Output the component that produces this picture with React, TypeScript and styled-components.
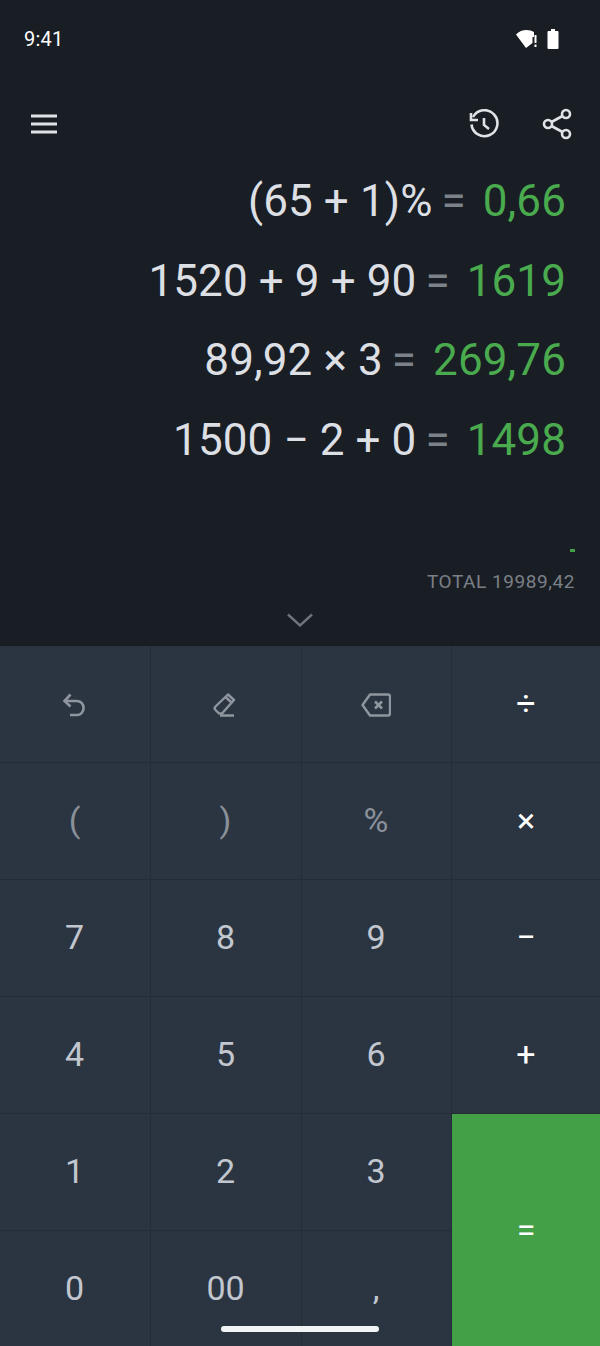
import styled, { createGlobalStyle } from 'styled-components';

const GlobalStyle = createGlobalStyle`
	html, body {
		margin: 0;
		padding: 0;
		background: #191d24;
		font-family: Roboto, 'Liberation Sans', sans-serif;
	}
`;

const Screen = styled.div`
	width: 600px;
	height: 1346px;
	overflow: hidden;
	position: relative;
	background: #191d24;
	display: flex;
	flex-direction: column;
`;

const Display = styled.div`
	height: 646px;
	flex-shrink: 0;
	display: flex;
	flex-direction: column;
`;

const StatusBar = styled.div`
	height: 78px;
	padding: 0 41px 0 24px;
	display: flex;
	align-items: center;
	justify-content: space-between;
	box-sizing: border-box;
	color: #fff;
	font-size: 20px;
	letter-spacing: 0.2px;
`;

const StatusIcons = styled.div`
	display: flex;
	align-items: center;
	gap: 7px;
`;

const Toolbar = styled.div`
	height: 44px;
	margin-top: 24px;
	padding: 0 28px 0 30px;
	display: flex;
	align-items: center;
	justify-content: space-between;
`;

const ToolGroup = styled.div`
	display: flex;
	align-items: center;
	gap: 43px;
`;

const Lines = styled.div`
	margin-top: 16px;
	padding-right: 34px;
	display: flex;
	flex-direction: column;
	align-items: flex-end;
`;

const Line = styled.div`
	height: 79.5px;
	line-height: 79.5px;
	font-size: 44px;
	font-weight: 400;
	letter-spacing: 0.1px;
	color: #dcdfe3;
	white-space: pre;
`;

const Equals = styled.span`
	color: #7c828a;
	margin: 0 17px 0 9px;
`;

const Result = styled.span`
	color: #4aaa4e;
`;

const Totals = styled.div`
	margin-top: auto;
	padding-right: 25px;
	display: flex;
	flex-direction: column;
	align-items: flex-end;
`;

const Dash = styled.div`
	width: 5px;
	height: 3px;
	background: #43a047;
	margin: 0 0 18px;
`;

const TotalText = styled.div`
	font-size: 19px;
	line-height: 24px;
	margin-bottom: 1px;
	letter-spacing: 0.55px;
	color: #7b8087;
`;

const Chevron = styled.div`
	height: 42px;
	display: flex;
	align-items: center;
	justify-content: center;
	margin: 4px 0 5px;
`;

const Keypad = styled.div`
	flex: 1;
	display: grid;
	grid-template-columns: 151px 151px 150px 148px;
	grid-template-rows: repeat(6, 117px);
	background: #2b3541;
`;

const Key = styled.div<{ $tone?: 'digit' | 'muted' | 'icon' | 'op' | 'equals' }>`
	display: flex;
	align-items: center;
	justify-content: center;
	box-sizing: border-box;
	padding: 0 1px 2px 0;
	font-size: 34px;
	font-weight: 400;
	border-right: 1px solid #232c37;
	border-bottom: 1px solid #232c37;
	color: ${(p) => (p.$tone === 'muted' ? '#8a919a' : p.$tone === 'op' || p.$tone === 'equals' ? '#ffffff' : '#c2c7cf')};
	${(p) => p.$tone === 'icon' && 'padding: 2px 2px 0 0;'}
	${(p) => p.$tone === 'op' && 'border-right: none; padding: 0 0 2px 0;'}
	${(p) => p.$tone === 'equals' && 'grid-row: span 2; background: #43a047; border: none; padding: 0 0 2px 0;'}
`;

const HomeBar = styled.div`
	position: absolute;
	left: 221px;
	bottom: 14px;
	width: 158px;
	height: 6px;
	border-radius: 3px;
	background: #f1f3f5;
`;

const WifiIcon = () => (
	<svg width="24" height="20" viewBox="0 0 24 20" fill="#fff">
		<path d="M0 5.5 C5 0 13 0 18 3 L18 8 L16.5 8 L16.5 14 L10 19 Z" />
		<rect x="18.5" y="6" width="2" height="8" />
		<rect x="18.5" y="15.5" width="2" height="2.5" />
	</svg>
);

const BatteryIcon = () => (
	<svg width="12" height="20" viewBox="0 0 12 20" fill="#fff">
		<path d="M4 0h4v2h2.5a1 1 0 0 1 1 1v16a1 1 0 0 1-1 1h-9a1 1 0 0 1-1-1V3a1 1 0 0 1 1-1H4z" />
	</svg>
);

const MenuIcon = () => (
	<svg width="28" height="22" viewBox="0 0 28 22" stroke="#dfe2e6" strokeWidth="3" fill="none">
		<path d="M1 3h26M1 11h26M1 19h26" />
	</svg>
);

const HistoryIcon = () => (
	<svg width="30" height="30" viewBox="0 0 30 30" fill="none" stroke="#dfe2e6" strokeWidth="2.6">
		<path d="M4 8 A13 13 0 1 1 2.5 15.5" />
		<path d="M2 4v7h7" />
		<path d="M15 9v7l5 4" />
	</svg>
);

const ShareIcon = () => (
	<svg width="30" height="32" viewBox="0 0 30 32" fill="none" stroke="#dfe2e6" strokeWidth="2.6">
		<circle cx="24" cy="6" r="4" />
		<circle cx="6" cy="16" r="4" />
		<circle cx="24" cy="26" r="4" />
		<path d="M9.5 14L20.5 8M9.5 18l11 6" />
	</svg>
);

const ChevronIcon = () => (
	<svg width="26" height="14" viewBox="0 0 26 14" fill="none" stroke="#6e747c" strokeWidth="2.4">
		<path d="M1 1.5l12 11 12-11" />
	</svg>
);

const UndoIcon = () => (
	<svg width="24" height="24" viewBox="0 0 24 24" fill="none" stroke="#8f969f" strokeWidth="2.6">
		<path d="M8.5 1.5L2.5 8 8.5 13.5" />
		<path d="M3 8h12a6.5 6.5 0 0 1 6.5 6.5v1a6.5 6.5 0 0 1-6.5 6.5H8" />
	</svg>
);

const EraserIcon = () => (
	<svg width="24" height="24" viewBox="0 0 24 24" fill="none" stroke="#8f969f" strokeWidth="2.4" strokeLinejoin="round">
		<path d="M15 1.5l6 5.5L9 20.5H6L2.5 17a2.5 2.5 0 0 1 0-3.5z" />
		<path d="M12.5 4l6.5 6M7 22.5h14" />
	</svg>
);

const BackspaceIcon = () => (
	<svg width="30" height="24" viewBox="0 0 30 24" fill="none" stroke="#8f969f" strokeWidth="2.4" strokeLinejoin="round">
		<path d="M9 1.5h18a2 2 0 0 1 2 2v17a2 2 0 0 1-2 2H9L1.5 12z" />
		<path d="M14 8.5l7 7M21 8.5l-7 7" strokeWidth="2.6" />
	</svg>
);

const expressions = [
	{ expr: '(65 + 1)%', result: '0,66' },
	{ expr: '1520 + 9 + 90', result: '1619' },
	{ expr: '89,92 × 3', result: '269,76' },
	{ expr: '1500 − 2 + 0', result: '1498' },
];

const App = () => {
	return (
		<Screen>
			<GlobalStyle />
			<Display>
				<StatusBar>
					<span>9:41</span>
					<StatusIcons>
						<WifiIcon />
						<BatteryIcon />
					</StatusIcons>
				</StatusBar>
				<Toolbar>
					<MenuIcon />
					<ToolGroup>
						<HistoryIcon />
						<ShareIcon />
					</ToolGroup>
				</Toolbar>
				<Lines>
					{expressions.map((item) => (
						<Line key={item.expr}>
							{item.expr}
							<Equals>=</Equals>
							<Result>{item.result}</Result>
						</Line>
					))}
				</Lines>
				<Totals>
					<Dash />
					<TotalText>TOTAL 19989,42</TotalText>
				</Totals>
				<Chevron>
					<ChevronIcon />
				</Chevron>
			</Display>
			<Keypad>
				<Key $tone="icon"><UndoIcon /></Key>
				<Key $tone="icon"><EraserIcon /></Key>
				<Key $tone="icon"><BackspaceIcon /></Key>
				<Key $tone="op">÷</Key>
				<Key $tone="muted">(</Key>
				<Key $tone="muted">)</Key>
				<Key $tone="muted">%</Key>
				<Key $tone="op">×</Key>
				<Key>7</Key>
				<Key>8</Key>
				<Key>9</Key>
				<Key $tone="op">−</Key>
				<Key>4</Key>
				<Key>5</Key>
				<Key>6</Key>
				<Key $tone="op">+</Key>
				<Key>1</Key>
				<Key>2</Key>
				<Key>3</Key>
				<Key $tone="equals">=</Key>
				<Key>0</Key>
				<Key>00</Key>
				<Key>,</Key>
			</Keypad>
			<HomeBar />
		</Screen>
	);
};

export default App;
